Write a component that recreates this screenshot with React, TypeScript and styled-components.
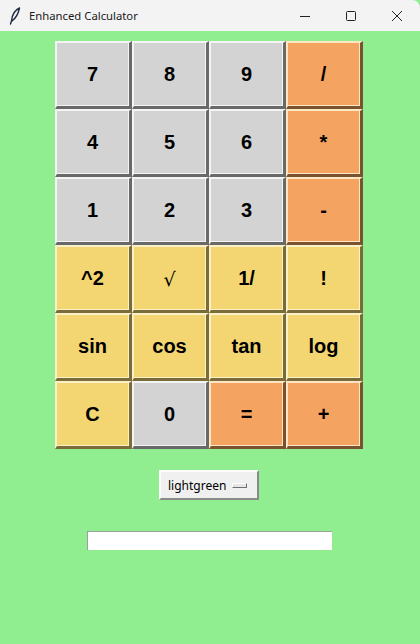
import styled, { createGlobalStyle } from "styled-components";

type Tone = "gray" | "orange" | "yellow";

const keys: { label: string; tone: Tone }[] = [
  { label: "7", tone: "gray" },
  { label: "8", tone: "gray" },
  { label: "9", tone: "gray" },
  { label: "/", tone: "orange" },
  { label: "4", tone: "gray" },
  { label: "5", tone: "gray" },
  { label: "6", tone: "gray" },
  { label: "*", tone: "orange" },
  { label: "1", tone: "gray" },
  { label: "2", tone: "gray" },
  { label: "3", tone: "gray" },
  { label: "-", tone: "orange" },
  { label: "^2", tone: "yellow" },
  { label: "√", tone: "yellow" },
  { label: "1/", tone: "yellow" },
  { label: "!", tone: "yellow" },
  { label: "sin", tone: "yellow" },
  { label: "cos", tone: "yellow" },
  { label: "tan", tone: "yellow" },
  { label: "log", tone: "yellow" },
  { label: "C", tone: "yellow" },
  { label: "0", tone: "gray" },
  { label: "=", tone: "orange" },
  { label: "+", tone: "orange" },
];

const palette: Record<Tone, { bg: string; light: string; dark: string }> = {
  gray: { bg: "#d3d3d3", light: "#f4f4f4", dark: "#696969" },
  orange: { bg: "#f4a460", light: "#fde6c4", dark: "#7a5230" },
  yellow: { bg: "#f3d672", light: "#fbf1c8", dark: "#7a6b39" },
};

export default function App() {
  return (
    <>
      <GlobalStyle />
      <Window>
        <TitleBar>
          <TitleLeft>
            <svg width="12" height="18" viewBox="0 0 12 18">
              <path
                d="M10.5 1 C6 3 3 8 2.5 14 L1.5 17 M10.5 1 C9.5 6 7 11 3 14"
                fill="none"
                stroke="#1f2a44"
                strokeWidth="1.4"
                strokeLinecap="round"
              />
            </svg>
            <Title>Enhanced Calculator</Title>
          </TitleLeft>
          <Controls>
            <Control>
              <svg width="12" height="12" viewBox="0 0 12 12">
                <path d="M1 6.5 H11" stroke="#222" strokeWidth="1" />
              </svg>
            </Control>
            <Control>
              <svg width="12" height="12" viewBox="0 0 12 12">
                <rect x="1.5" y="1.5" width="9" height="9" rx="1" fill="none" stroke="#222" strokeWidth="1" />
              </svg>
            </Control>
            <Control>
              <svg width="12" height="12" viewBox="0 0 12 12">
                <path d="M1 1 L11 11 M11 1 L1 11" stroke="#222" strokeWidth="1" />
              </svg>
            </Control>
          </Controls>
        </TitleBar>

        <Body>
          <Keypad>
            {keys.map((k) => (
              <Key key={k.label} $tone={k.tone}>
                {k.label === "√" ? <Root>√</Root> : k.label}
              </Key>
            ))}
          </Keypad>

          <OptionMenu>
            <span>lightgreen</span>
            <Indicator />
          </OptionMenu>

          <Entry />
        </Body>
      </Window>
    </>
  );
}

const GlobalStyle = createGlobalStyle`
  html, body {
    margin: 0;
    padding: 0;
    width: 420px;
    height: 644px;
    overflow: hidden;
  }
  * { box-sizing: border-box; }
`;

const Window = styled.div`
  width: 420px;
  height: 644px;
  display: flex;
  flex-direction: column;
  background: #90ee90;
`;

const TitleBar = styled.div`
  height: 31px;
  background: #f3f3f3;
  display: flex;
  align-items: center;
  justify-content: space-between;
  border-top-right-radius: 8px;
`;

const TitleLeft = styled.div`
  display: flex;
  align-items: center;
  gap: 8px;
  padding-left: 9px;
`;

const Title = styled.span`
  font-family: "Segoe UI", "Noto Sans", sans-serif;
  font-size: 11.3px;
  color: #1a1a1a;
`;

const Controls = styled.div`
  display: flex;
  height: 100%;
`;

const Control = styled.div`
  width: 46px;
  height: 100%;
  display: flex;
  align-items: center;
  justify-content: center;
`;

const Body = styled.div`
  flex: 1;
  display: flex;
  flex-direction: column;
  align-items: center;
  padding-top: 10px;
`;

const Keypad = styled.div`
  display: grid;
  grid-template-columns: repeat(4, 77px);
  grid-auto-rows: 68px;
  margin-left: -3px;
`;

const Key = styled.button<{ $tone: Tone }>`
  margin: 0;
  padding: 0;
  background: ${(p) => palette[p.$tone].bg};
  border-style: solid;
  border-width: 2px 3px 3px 2px;
  border-color: ${(p) =>
    `${palette[p.$tone].light} ${palette[p.$tone].dark} ${palette[p.$tone].dark} ${palette[p.$tone].light}`};
  box-shadow: inset -1px -1px 0 ${(p) => palette[p.$tone].light};
  font-family: "Liberation Sans", Arial, sans-serif;
  font-weight: bold;
  font-size: 20px;
  color: #000;
  display: flex;
  align-items: center;
  justify-content: center;
`;

const Root = styled.span`
  font-family: "DejaVu Sans", sans-serif;
  font-weight: normal;
  font-size: 19px;
`;

const OptionMenu = styled.div`
  margin-top: 21px;
  width: 100px;
  height: 30px;
  margin-left: -2px;
  background: #f0f0f0;
  border-style: solid;
  border-width: 2px;
  border-color: #ffffff #8a8a8a #8a8a8a #ffffff;
  display: flex;
  align-items: center;
  justify-content: space-between;
  padding: 0 10px 0 7px;
  font-family: "Segoe UI", "Noto Sans", sans-serif;
  font-size: 12px;
  color: #000;
`;

const Indicator = styled.span`
  width: 15px;
  height: 5px;
  border-style: solid;
  border-width: 1px;
  border-color: #ffffff #6f6f6f #6f6f6f #ffffff;
  background: #e6e6e6;
`;

const Entry = styled.div`
  margin-top: 31px;
  margin-left: -2px;
  width: 245px;
  height: 19px;
  background: #fff;
  border-top: 1px solid #9aa39a;
  border-left: 1px solid #9aa39a;
`;
